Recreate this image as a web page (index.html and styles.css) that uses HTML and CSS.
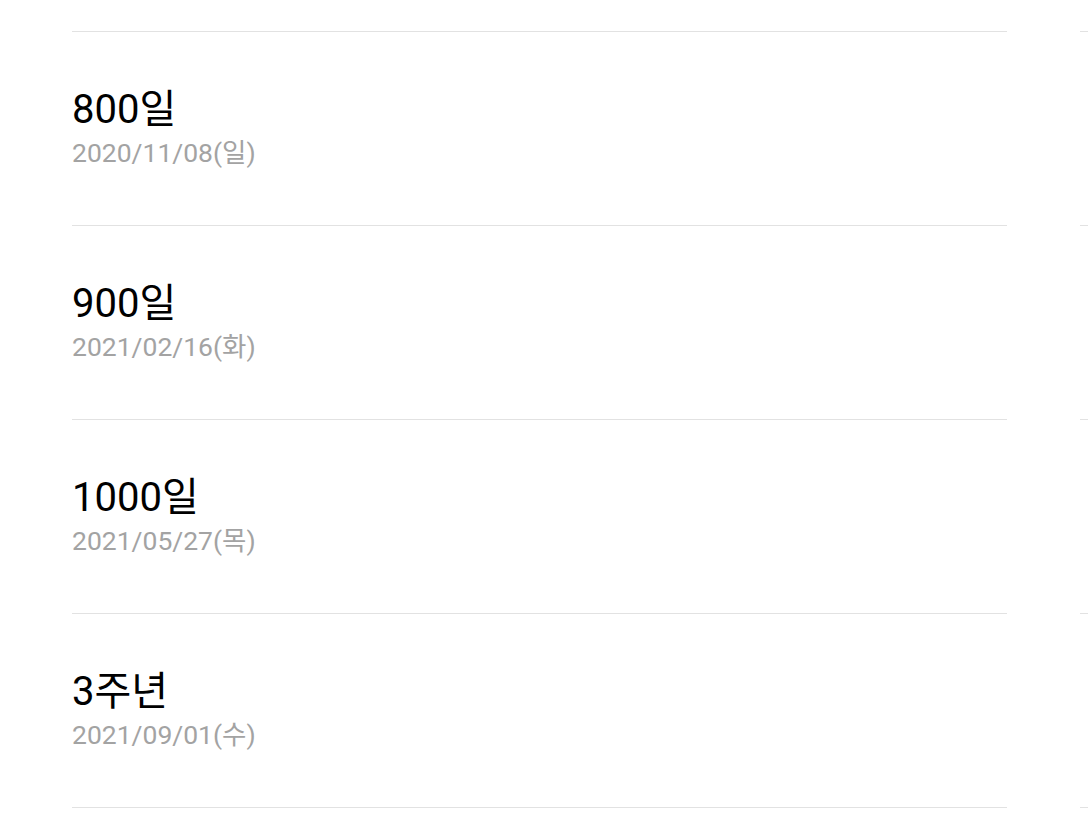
FILE: index.html
```html
<!DOCTYPE html>
<html lang="ko">
<head>
    <meta charset="UTF-8">
    <meta name="viewport" content="width=device-width, initial-scale=1.0">
    <title>기념일</title>
    <link rel="stylesheet" href="styles.css">
</head>
<body>
    <div class="pages">
        <ul class="anniversary-list">
            <li class="anniversary">
                <div class="anniversary-title">800일</div>
                <div class="anniversary-date">2020/11/08(일)</div>
            </li>
            <li class="anniversary">
                <div class="anniversary-title">900일</div>
                <div class="anniversary-date">2021/02/16(화)</div>
            </li>
            <li class="anniversary">
                <div class="anniversary-title">1000일</div>
                <div class="anniversary-date">2021/05/27(목)</div>
            </li>
            <li class="anniversary">
                <div class="anniversary-title">3주년</div>
                <div class="anniversary-date">2021/09/01(수)</div>
            </li>
        </ul>

        <!-- next page peeking in from the right -->
        <ul class="anniversary-list next-page">
            <li class="anniversary"></li>
            <li class="anniversary"></li>
            <li class="anniversary"></li>
            <li class="anniversary"></li>
        </ul>
    </div>
</body>
</html>
```

FILE: styles.css
```css
body {
    margin: 0;
    padding: 0;
    background: #fff;
    font-family: Roboto, "Noto Sans CJK KR", sans-serif;
    overflow: hidden;
}

.pages {
    display: flex;
    gap: 73px;
    padding: 31px 0 0 72px;
    height: 785px;
    overflow: hidden;
}

.anniversary-list {
    list-style: none;
    margin: 0;
    padding: 0;
    flex: 0 0 935px;
    border-top: 1px solid #e2e2e2;
}

.anniversary {
    box-sizing: border-box;
    height: 194px;
    padding-top: 55px;
    border-bottom: 1px solid #e2e2e2;
    display: flex;
    flex-direction: column;
    gap: 5px;
}

.anniversary-title {
    font-size: 40px;
    line-height: 46px;
    color: #000;
}

.anniversary-date {
    font-size: 26.5px;
    line-height: 30px;
    color: #a3a3a3;
}
```
